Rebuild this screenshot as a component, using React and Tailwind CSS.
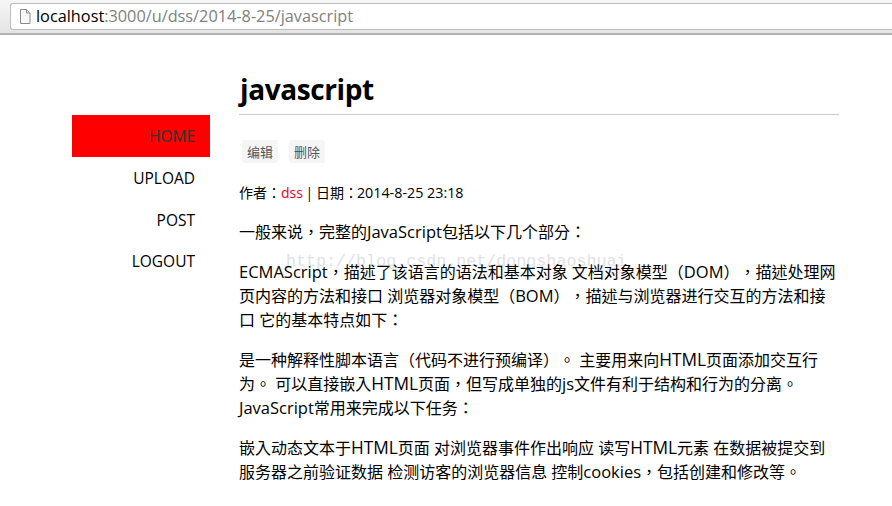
import React from 'react';

const navItems = ['HOME', 'UPLOAD', 'POST', 'LOGOUT'];

// Latin runs are a touch larger than the CJK around them
const L = ({ children }) => <span className="text-[16.500px]">{children}</span>;
const Html = () => <span className="text-[17.300px]">HTML</span>;

const App = () => {
    return (
        <div className="w-[892px] h-[506px] overflow-hidden bg-white text-black [text-spacing-trim:space-all] font-['Open_Sans','Noto_Sans_CJK_TC',sans-serif]">
            {/* Browser address bar */}
            <div className="h-[35px] pt-[3px] pl-[10px] border-b-2 border-[#b4b4b4] bg-gradient-to-b from-[#f6f6f6] to-[#e4e4e4]">
                <div className="flex items-center h-[27px] pl-[8px] bg-white border border-[#bdbdbd] rounded-tl-[3px] rounded-bl-[3px] border-r-0">
                    <svg width="12" height="15" viewBox="0 0 12 15" className="shrink-0">
                        <path d="M1.5 .5h6l3.500 3.500v10.500h-9.500z" fill="#f8f8f8" stroke="#8a8a8a" />
                        <path d="M7.500 .5v3.500h3.500" fill="#e0e0e0" stroke="#8a8a8a" />
                    </svg>
                    <span className="ml-[5px] text-[16.300px] leading-none text-black">localhost</span>
                    <span className="text-[16.300px] leading-none text-[#808080]">:3000/u/dss/2014-8-25/javascript</span>
                </div>
            </div>

            <div className="flex">
                {/* Side nav */}
                <ul className="w-[138px] ml-[72px] mt-[80px] shrink-0 text-[15.500px] text-right">
                    {navItems.map((item, i) => (
                        <li
                            key={item}
                            className={i === 0 ? 'h-[42px] leading-[42px] pr-[15px] bg-[#ff0000] text-[#333]' : 'h-[41.500px] pt-[1px] leading-[41.500px] pr-[15px]'}
                        >
                            {item}
                        </li>
                    ))}
                </ul>

                {/* Article */}
                <div className="relative w-[600px] ml-[29px] shrink-0">
                    {/* watermark */}
                    <div className="absolute left-[47px] top-[214px] font-['Liberation_Mono',monospace] text-[16.700px] text-[#e2e2e2] whitespace-nowrap pointer-events-none">http://blog.csdn.net/dongshaoshuai</div>

                    <h1 className="relative h-[45px] mt-[35px] pt-[1px] pl-[1px] text-[28px] tracking-[-0.4px] leading-[36px] font-bold border-b border-[#cccccc]">javascript</h1>
                    <div className="relative flex gap-[11px] mt-[25px] ml-[3px]">
                        <a className="px-[5px] h-[23px] leading-[25px] text-[13px] text-[#555] bg-[#f5f5f5] rounded-[3px]">编辑</a>
                        <a className="px-[5px] h-[23px] leading-[25px] text-[13px] text-[#555] bg-[#f5f5f5] rounded-[3px]">删除</a>
                    </div>
                    <p className="relative mt-[20px] text-[14px] leading-[20px]">
                        作者：<span className="text-[#e00030]">dss</span> <span className="-mx-[1px]">|</span> 日期：<span className="-ml-[1px] text-[14.300px]">2014-8-25 23:18</span>
                    </p>
                    <div className="relative text-[16px] leading-[24px]">
                        <p className="mt-[17px]">一般来说，完整的<L>JavaScript</L>包括以下几个部分：</p>
                        <p className="mt-[16px]"><L>ECMAScript</L>，描述了该语言的语法和基本对象 文档对象模型（<L>DOM</L>），描述处理网页内容的方法和接口 浏览器对象模型（<L>BOM</L>），描述与浏览器进行交互的方法和接口 它的基本特点如下：</p>
                        <p className="mt-[16px]">是一种解释性脚本语言（代码不进行预编译）。 主要用来向<Html />页面添加交互行为。 可以直接嵌入<Html />页面，但写成单独的<L>js</L>文件有利于结构和行为的分离。 <L>JavaScript</L>常用来完成以下任务：</p>
                        <p className="mt-[16px]">嵌入动态文本于<Html />页面 对浏览器事件作出响应 读写<Html />元素 在数据被提交到服务器之前验证数据 检测访客的浏览器信息 控制<L>cookies</L>，包括创建和修改等。</p>
                    </div>
                </div>
            </div>
        </div>
    );
};

export default App;
